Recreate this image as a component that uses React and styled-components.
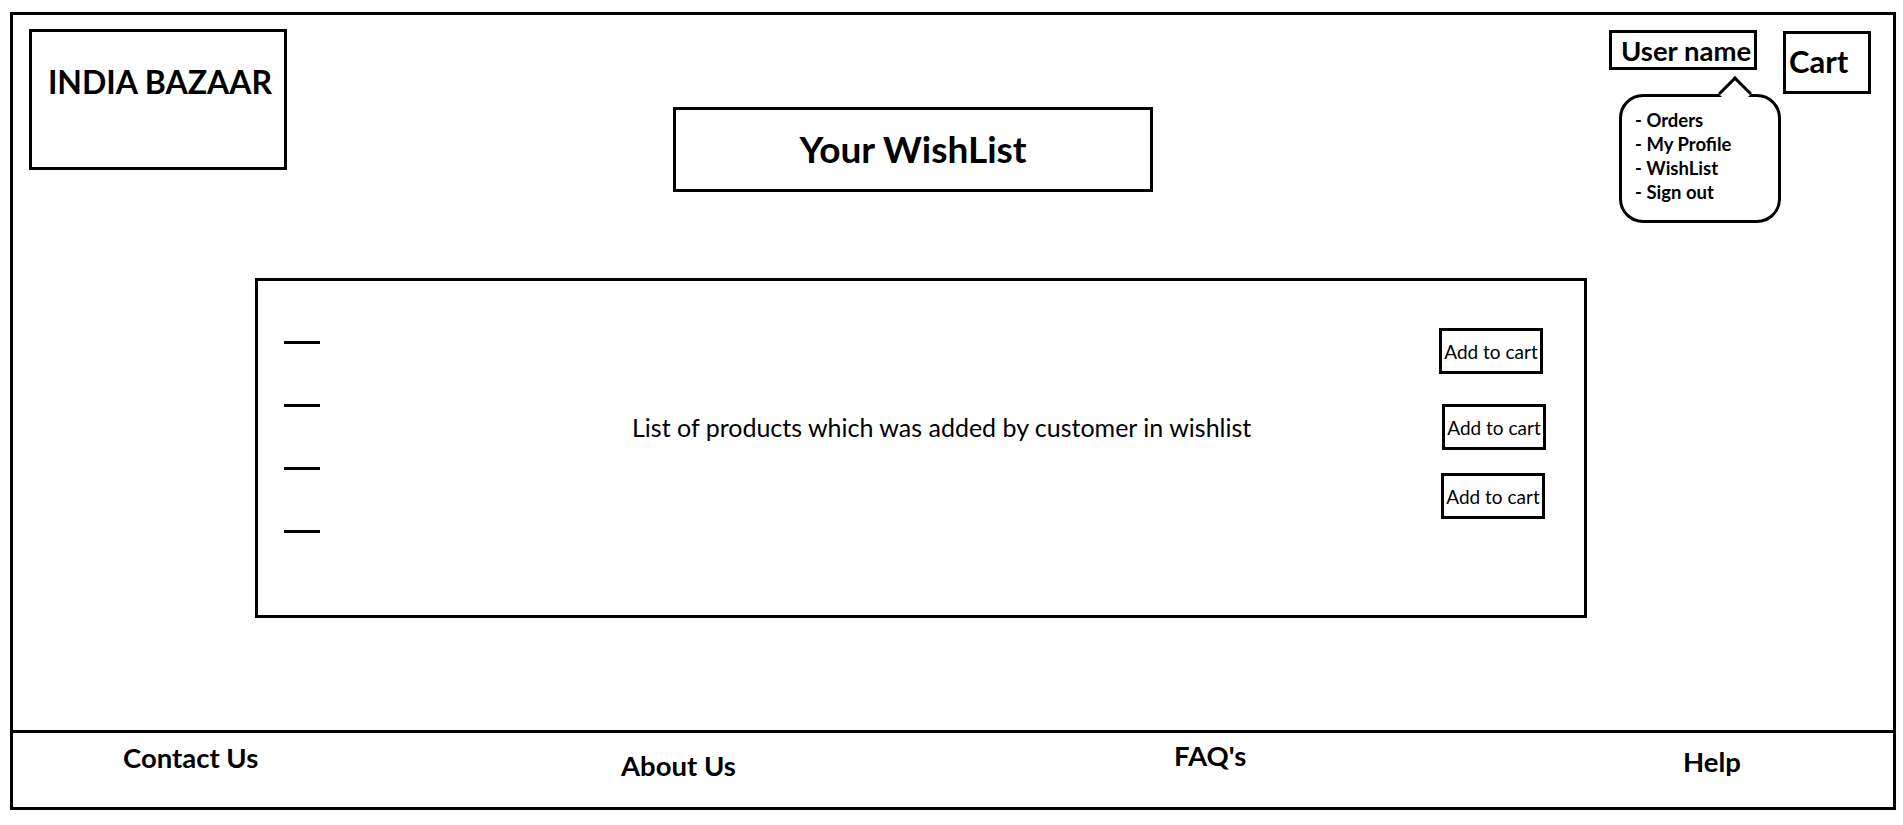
import React from 'react'
import styled, { createGlobalStyle } from 'styled-components'

const GlobalStyle = createGlobalStyle`
  body {
    margin: 0;
    background: #fff;
    color: #000;
    font-family: Lato, "Open Sans", sans-serif;
  }
`;

const Frame = styled.div`
  margin: 12px 0 0 10px;
  width: 1886px;
  border: 3px solid #000;
  box-sizing: border-box;
  display: flex;
  flex-direction: column;
`;

const Main = styled.main`
  height: 715px;
  display: flex;
  flex-direction: column;
`;

const Header = styled.header`
  height: 177px;
  display: flex;
  align-items: flex-start;
  padding: 0 22px 0 16px;
`;

const Outlined = styled.div`
  border: 3px solid #000;
  box-sizing: border-box;
  background: #fff;
`;

const Logo = styled(Outlined)`
  width: 258px;
  height: 141px;
  margin-top: 14px;
  padding: 31px 0 0 4px;
  text-align: center;
  font-size: 32px;
  font-weight: 700;
  line-height: 1.2;
`;

const PageTitle = styled(Outlined)`
  width: 480px;
  height: 85px;
  margin: 92px 0 0 386px;
  display: flex;
  align-items: center;
  justify-content: center;
  font-size: 37px;
  font-weight: 700;
  line-height: 1.2;
`;

const UserWrap = styled.div`
  position: relative;
  margin: 15px 0 0 456px;
`;

const UserName = styled(Outlined)`
  width: 148px;
  height: 40px;
  padding: 1px 0 0 9px;
  font-size: 27.5px;
  font-weight: 700;
  line-height: 1.2;
  white-space: nowrap;
`;

const Menu = styled.ul`
  position: absolute;
  top: 64px;
  left: 10px;
  z-index: 2;
  width: 162px;
  height: 129px;
  box-sizing: border-box;
  margin: 0;
  padding: 11px 0 0 13px;
  list-style: none;
  background: #fff;
  border: 3px solid #000;
  border-radius: 24px;
  font-size: 18.5px;
  font-weight: 700;
  line-height: 24px;
  white-space: nowrap;

  &::before {
    content: '';
    position: absolute;
    top: -16px;
    left: 101px;
    width: 24px;
    height: 24px;
    box-sizing: border-box;
    background: #fff;
    border-left: 3px solid #000;
    border-top: 3px solid #000;
    transform: rotate(45deg);
  }
`;

const MenuItem = styled.li`
  position: relative;
`;

const Cart = styled(Outlined)`
  width: 88px;
  height: 63px;
  margin: 16px 0 0 26px;
  padding: 9px 0 0 3px;
  font-size: 31px;
  font-weight: 700;
  line-height: 1.2;
`;

const ListBox = styled(Outlined)`
  width: 1332px;
  height: 340px;
  margin: 86px 0 0 242px;
  display: flex;
  align-items: flex-start;
`;

const Dashes = styled.div`
  display: flex;
  flex-direction: column;
  gap: 60px;
  padding: 60px 0 0 26px;
`;

const Dash = styled.span`
  display: block;
  width: 36px;
  height: 3px;
  background: #000;
`;

const Message = styled.p`
  margin: 131px 0 0 312px;
  font-size: 25px;
  line-height: 1.2;
  white-space: nowrap;
`;

const Buttons = styled.div`
  width: 108px;
  margin: 0 38px 0 auto;
  padding-top: 47px;
  display: flex;
  flex-direction: column;
  align-items: flex-start;
`;

const CartButton = styled.button`
  width: 104px;
  height: 46px;
  margin: ${p => p.$mt}px 0 0 ${p => p.$ml}px;
  padding: 0;
  border: 3px solid #000;
  background: #fff;
  color: #000;
  font-family: inherit;
  font-size: 19px;
  white-space: nowrap;
`;

const Footer = styled.footer`
  height: 77px;
  box-sizing: border-box;
  border-top: 3px solid #000;
  display: grid;
  grid-template-columns: 498px 553px 509px 1fr;
  align-items: start;
  padding-left: 110px;
`;

const FooterLink = styled.a`
  justify-self: start;
  margin-top: ${p => p.$top}px;
  color: #000;
  text-decoration: none;
  font-size: 27.5px;
  font-weight: 700;
  line-height: 1.2;
`;

const menu = ['- Orders', '- My Profile', '- WishList', '- Sign out'];
const buttons = [
  { mt: 0, ml: 1 },
  { mt: 30, ml: 4 },
  { mt: 23, ml: 3 },
];
const links = [
  { label: 'Contact Us', top: 8 },
  { label: 'About Us', top: 16 },
  { label: "FAQ's", top: 6 },
  { label: 'Help', top: 12 },
];

function App() {
  return (
    <>
      <GlobalStyle />
      <Frame>
        <Main>
          <Header>
            <Logo>INDIA BAZAAR</Logo>
            <PageTitle>Your WishList</PageTitle>
            <UserWrap>
              <UserName>User name</UserName>
              <Menu>
                {menu.map(m => <MenuItem key={m}>{m}</MenuItem>)}
              </Menu>
            </UserWrap>
            <Cart>Cart</Cart>
          </Header>

          <ListBox>
            <Dashes>
              <Dash /><Dash /><Dash /><Dash />
            </Dashes>
            <Message>List of products which was added by customer in wishlist</Message>
            <Buttons>
              {buttons.map((b, i) => (
                <CartButton key={i} $mt={b.mt} $ml={b.ml}>Add to cart</CartButton>
              ))}
            </Buttons>
          </ListBox>
        </Main>

        <Footer>
          {links.map(l => (
            <FooterLink key={l.label} href="#" $top={l.top}>{l.label}</FooterLink>
          ))}
        </Footer>
      </Frame>
    </>
  )
}

export default App
